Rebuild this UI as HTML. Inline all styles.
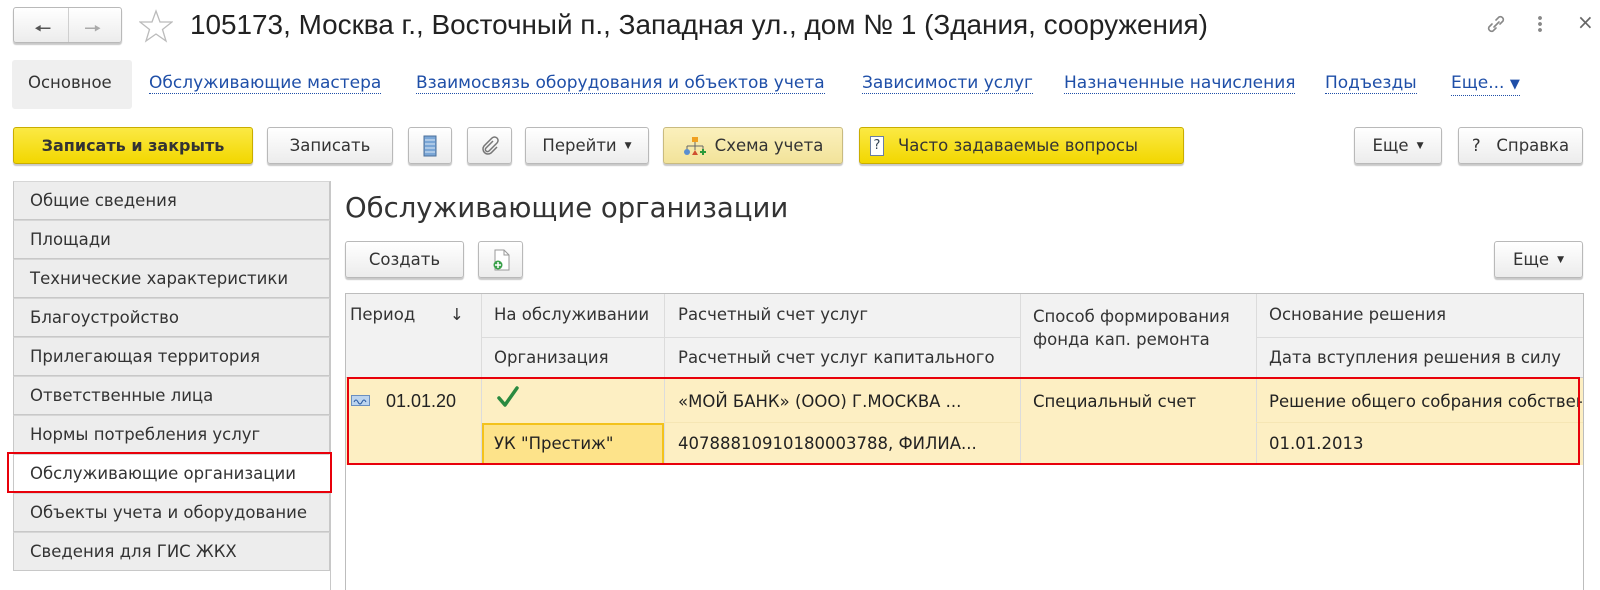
<!DOCTYPE html>
<html><head><meta charset="utf-8"><style>
*{box-sizing:border-box;margin:0;padding:0}
body{width:1600px;height:590px;background:#fff;font-family:"DejaVu Sans",Verdana,sans-serif;color:#333;position:relative;overflow:hidden}
.a{position:absolute}
.btn{position:absolute;height:37px;border:1px solid #b9b9b9;border-radius:3px;background:linear-gradient(#fff,#ececec);box-shadow:0 2px 1px #c9c9c9;font-size:16.5px;color:#333;display:flex;align-items:center;justify-content:center;white-space:nowrap}
.yel{background:linear-gradient(#fbe944,#f2d700);border-color:#c9ad00}
.pale{background:linear-gradient(#fbf0bc,#f2e39a);border-color:#c9bb80}
.lnk{position:absolute;top:73px;font-size:17px;color:#1f4fa8;border-bottom:1px dotted #1f4fa8;line-height:20px;white-space:nowrap}
.nav{position:absolute;left:13px;width:317px;height:39px;background:#ededed;border:1px solid #c8c8c8;border-top-color:#d6d6d6;font-size:16.5px;padding-left:16px;line-height:37px;color:#333;white-space:nowrap}
.c{position:absolute;font-size:16.5px;color:#333;white-space:nowrap}
.vl{position:absolute;width:1px;background:#dcdcdc}
.hl{position:absolute;height:1px;background:#dcdcdc}
</style></head><body>
<!-- header -->
<div class="btn" style="left:13px;top:7px;width:109px;height:36px;justify-content:flex-start">
<span style="position:absolute;left:20px;top:6px;font-size:20px;color:#555">&#129044;</span>
<span style="position:absolute;left:54px;top:0;width:1px;height:34px;background:#cfcfcf"></span>
<span style="position:absolute;left:70px;top:6px;font-size:20px;color:#aaa">&#129046;</span>
</div>
<svg class="a" style="left:139px;top:9px" width="34" height="34" viewBox="0 0 34 34"><polygon points="17,2 21,13 33,13 23.5,20.5 27,32 17,25 7,32 10.5,20.5 1,13 13,13" fill="none" stroke="#bbb" stroke-width="1.3"/></svg>
<div class="a" style="left:190px;top:9px;font-family:'Liberation Sans',Arial,sans-serif;font-size:27.9px;color:#222;white-space:nowrap">105173, Москва г., Восточный п., Западная ул., дом № 1 (Здания, сооружения)</div>
<svg class="a" style="left:1484px;top:12px" width="24" height="24" viewBox="0 0 24 24"><path d="M10 15l5-5M8 12l-3 3a3 3 0 0 0 4 4l3-3M16 12l3-3a3 3 0 0 0-4-4l-3 3" fill="none" stroke="#888" stroke-width="1.6" stroke-linecap="round"/></svg>
<div class="a" style="left:1538px;top:15px;width:4px;height:18px;background:radial-gradient(circle,#888 1.8px,transparent 2px) 0 0/4px 6px"></div>
<div class="a" style="left:1577px;top:10px;font-size:20px;color:#666">×</div>
<!-- tabs -->
<div class="a" style="left:12px;top:60px;width:120px;height:49px;background:#efefef;border-radius:3px"></div>
<div class="a" style="left:28px;top:73px;font-size:16.5px;color:#333">Основное</div>
<div class="lnk" style="left:149px">Обслуживающие мастера</div>
<div class="lnk" style="left:416px">Взаимосвязь оборудования и объектов учета</div>
<div class="lnk" style="left:862px">Зависимости услуг</div>
<div class="lnk" style="left:1064px">Назначенные начисления</div>
<div class="lnk" style="left:1325px">Подъезды</div>
<div class="lnk" style="left:1451px">Еще... <span style="font-size:13px;border:0">&#9660;</span></div>
<!-- toolbar -->
<div class="btn yel" style="left:13px;top:127px;width:240px;font-weight:bold;color:#333;font-size:16px">Записать и закрыть</div>
<div class="btn" style="left:267px;top:127px;width:126px">Записать</div>
<div class="btn" style="left:408px;top:127px;width:44px"><svg width="14" height="22"><rect x="1" y="1" width="12" height="20" fill="#7aa6d6" stroke="#4a6f9a"/><path d="M2 5h10M2 9h10M2 13h10M2 17h10" stroke="#dfeaf7"/></svg></div>
<div class="btn" style="left:467px;top:127px;width:45px"><svg width="18" height="20" viewBox="0 0 18 20"><path d="M12 5l-7 7a2 2 0 0 0 3 3l8-8a3.5 3.5 0 0 0-5-5l-8 8a5 5 0 0 0 7 7l6-6" fill="none" stroke="#777" stroke-width="1.5"/></svg></div>
<div class="btn" style="left:525px;top:127px;width:124px">Перейти <span style="font-size:9px;margin-left:8px">&#9660;</span></div>
<div class="btn pale" style="left:663px;top:127px;width:180px"><svg width="24" height="20" style="margin-right:8px"><rect x="9" y="1" width="6" height="5" fill="#f0a020"/><path d="M12 6v4M4 10h16M4 10v4M12 10v4M20 10v4" stroke="#666"/><circle cx="4" cy="16" r="3" fill="#5b8fd0"/><path d="M9 19l3-5 3 5z" fill="#d05030"/><path d="M20 13v6M17 16h6" stroke="#2a9a3a" stroke-width="2"/></svg>Схема учета</div>
<div class="btn yel" style="left:859px;top:127px;width:325px;justify-content:flex-start;padding-left:10px"><span style="display:inline-block;width:14px;height:20px;border:1px solid #6a7fa5;background:#fff;font-size:13px;line-height:18px;text-align:center;color:#345;margin-right:14px">?</span>Часто задаваемые вопросы</div>
<div class="btn" style="left:1354px;top:127px;width:88px">Еще <span style="font-size:9px;margin-left:8px">&#9660;</span></div>
<div class="btn" style="left:1458px;top:127px;width:125px">?&nbsp;&nbsp; Справка</div>
<!-- nav -->
<div class="a" style="left:330px;top:181px;width:1px;height:409px;background:#c8c8c8"></div>
<div class="nav" style="top:181px">Общие сведения</div>
<div class="nav" style="top:220px">Площади</div>
<div class="nav" style="top:259px">Технические характеристики</div>
<div class="nav" style="top:298px">Благоустройство</div>
<div class="nav" style="top:337px">Прилегающая территория</div>
<div class="nav" style="top:376px">Ответственные лица</div>
<div class="nav" style="top:415px">Нормы потребления услуг</div>
<div class="nav" style="top:454px;background:#fff;border-right-color:#fff">Обслуживающие организации</div>
<div class="nav" style="top:493px">Объекты учета и оборудование</div>
<div class="nav" style="top:532px">Сведения для ГИС ЖКХ</div>
<div class="a" style="left:7px;top:452px;width:325px;height:41px;border:2px solid #e8000a"></div>
<!-- main -->
<div class="a" style="left:345px;top:192px;font-size:27.5px;color:#333">Обслуживающие организации</div>
<div class="btn" style="left:345px;top:241px;width:119px">Создать</div>
<div class="btn" style="left:478px;top:241px;width:45px"><svg width="18" height="22"><path d="M3 1h9l5 5v15H3z" fill="#fff" stroke="#999"/><path d="M12 1v5h5" fill="none" stroke="#999"/><circle cx="6" cy="16" r="4.5" fill="#3aa04a"/><path d="M6 13v6M3 16h6" stroke="#fff" stroke-width="1.5"/></svg></div>
<div class="btn" style="left:1494px;top:241px;width:89px">Еще <span style="font-size:9px;margin-left:8px">&#9660;</span></div>
<!-- table -->
<div class="a" style="left:345px;top:293px;width:1239px;height:297px;border:1px solid #bdbdbd;border-bottom:0"></div>
<div class="a" style="left:346px;top:294px;width:1237px;height:84px;background:#f2f2f2"></div>
<div class="a" style="left:346px;top:378px;width:1237px;height:87px;background:#fdefc3"></div>
<div class="a" style="left:482px;top:423px;width:182px;height:42px;background:#fde38a;border:2px solid #f3c21c"></div>
<div class="vl" style="left:481px;top:294px;height:171px"></div>
<div class="vl" style="left:664px;top:294px;height:171px"></div>
<div class="vl" style="left:1020px;top:294px;height:171px"></div>
<div class="vl" style="left:1256px;top:294px;height:171px"></div>
<div class="hl" style="left:482px;top:337px;width:538px"></div>
<div class="hl" style="left:1256px;top:337px;width:327px"></div>
<div class="hl" style="left:346px;top:377px;width:1237px;background:#cfcfcf"></div>
<div class="hl" style="left:664px;top:422px;width:356px;background:#f6e6b4"></div>
<div class="hl" style="left:1256px;top:422px;width:327px;background:#f6e6b4"></div>
<div class="c" style="left:350px;top:305px">Период</div>
<div class="c" style="left:450px;top:305px">&#8595;</div>
<div class="c" style="left:494px;top:305px">На обслуживании</div>
<div class="c" style="left:494px;top:348px">Организация</div>
<div class="c" style="left:678px;top:305px">Расчетный счет услуг</div>
<div class="c" style="left:678px;top:348px">Расчетный счет услуг капитального</div>
<div class="c" style="left:1033px;top:305px;line-height:23px">Способ формирования<br>фонда кап. ремонта</div>
<div class="c" style="left:1269px;top:305px">Основание решения</div>
<div class="c" style="left:1269px;top:348px">Дата вступления решения в силу</div>
<div class="a" style="left:351px;top:395px;width:19px;height:11px;background:#bcd4ee;border:1px solid #6a8fc0"><svg width="17" height="9" style="display:block"><path d="M2 6q2-4 4 0t4 0 4 0" fill="none" stroke="#2a5aa0"/></svg></div>
<div class="c" style="left:386px;top:391px;font-size:18px;color:#222;font-family:'Liberation Sans',Arial,sans-serif">01.01.20</div>
<svg class="a" style="left:497px;top:386px" width="22" height="22" viewBox="0 0 22 22"><path d="M2 12l6 7L20 2" fill="none" stroke="#2a8a40" stroke-width="3.5" stroke-linecap="round" stroke-linejoin="round"/></svg>
<div class="c" style="left:678px;top:392px;color:#222">«МОЙ БАНК» (ООО) Г.МОСКВА ...</div>
<div class="c" style="left:494px;top:434px;color:#222">УК "Престиж"</div>
<div class="c" style="left:678px;top:434px;color:#222">40788810910180003788, ФИЛИА...</div>
<div class="c" style="left:1033px;top:392px;color:#222">Специальный счет</div>
<div class="a" style="left:1269px;top:392px;width:313px;overflow:hidden;font-size:16.5px;color:#222;white-space:nowrap">Решение общего собрания собственников</div>
<div class="c" style="left:1269px;top:434px;color:#222">01.01.2013</div>
<div class="a" style="left:347px;top:377px;width:1233px;height:88px;border:2px solid #e8000a"></div>
</body></html>
